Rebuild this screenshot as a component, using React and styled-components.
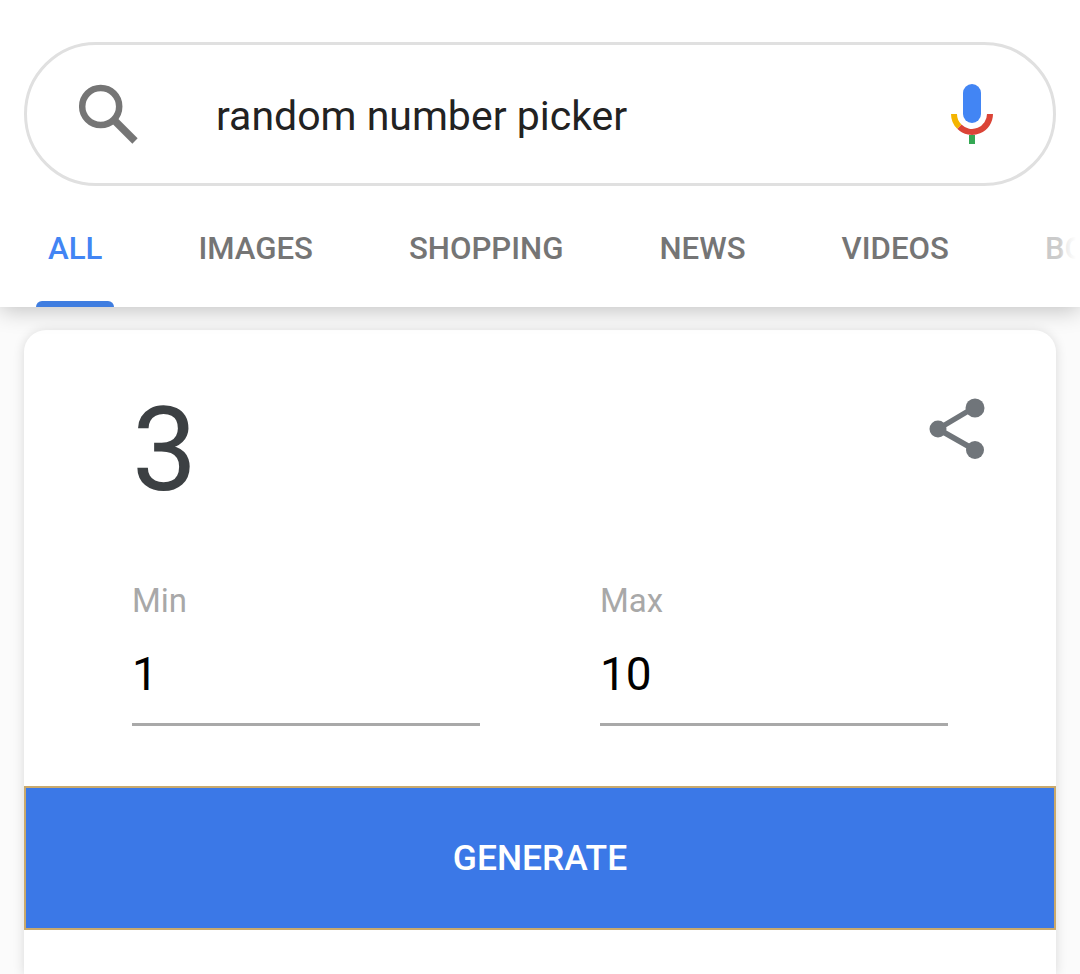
import React from "react";
import styled, { createGlobalStyle } from "styled-components";

const Global = createGlobalStyle`
  html, body { margin: 0; padding: 0; background: #fbfbfb; }
  body { height: 974px; overflow: hidden; font-family: Roboto, "Liberation Sans", sans-serif; }
  * { box-sizing: border-box; }
`;

const Page = styled.div`
  width: 1080px;
  height: 974px;
  overflow: hidden;
  display: flex;
  flex-direction: column;
  background: #fbfbfb;
`;

const Header = styled.header`
  position: relative;
  z-index: 1;
  flex: 0 0 307px;
  background: #fff;
  padding: 42px 24px 0;
  box-shadow: 0 3px 22px rgba(0, 0, 0, 0.24);
`;

const SearchBar = styled.div`
  height: 144px;
  border: 3px solid #e0e0e0;
  border-radius: 72px;
  display: flex;
  align-items: center;
  padding: 0 59px 0 50px;
`;

const SearchIcon = styled.svg`
  width: 64px;
  height: 64px;
  flex: none;
`;

const Query = styled.div`
  flex: 1;
  margin-left: 75px;
  font-size: 41px;
  line-height: 50px;
  color: #222;
  position: relative;
  top: 2px;
`;

const MicIcon = styled.svg`
  width: 46px;
  height: 64px;
  flex: none;
`;

const Tabs = styled.nav`
  position: relative;
  display: flex;
  height: 121px;
  margin: 0 -24px;
  padding-left: 6px;
  overflow: hidden;
`;

const Tab = styled.div`
  position: relative;
  flex: none;
  padding: 0 42px;
  margin-right: 12px;
  height: 121px;
  line-height: 126px;
  font-size: 31.2px;
  font-weight: 500;
  white-space: nowrap;
  color: ${(p) => (p.$active ? "#4285f4" : "#757575")};
  ${(p) =>
    p.$active &&
    `&::after {
      content: "";
      position: absolute;
      left: 30px;
      right: 30px;
      bottom: 0;
      height: 6px;
      background: #3f7de0;
      border-radius: 7px 7px 0 0;
    }`}
`;

const Fade = styled.div`
  position: absolute;
  top: 0;
  bottom: 0;
  right: 0;
  width: 50px;
  background: linear-gradient(90deg, rgba(255,255,255,0.6) 0%, rgba(255,255,255,0.63) 60%, rgba(255,255,255,0.85) 70%, #fff 92%);
`;

const Card = styled.main`
  margin: 23px 24px 0;
  flex: 1;
  background: #fff;
  border-radius: 22px 22px 0 0;
  box-shadow: 0 1px 12px rgba(0, 0, 0, 0.14);
  display: flex;
  flex-direction: column;
`;

const CardBody = styled.div`
  height: 456px;
  padding: 0 67px 0 108px;
  display: flex;
  flex-direction: column;
`;

const ResultRow = styled.div`
  height: 244px;
  display: flex;
  justify-content: space-between;
  align-items: flex-start;
`;

const Result = styled.div`
  font-size: 116px;
  line-height: 136px;
  margin-top: 52px;
  color: #3c4043;
`;

const ShareIcon = styled.svg`
  width: 60px;
  height: 66px;
  margin-top: 68px;
  flex: none;
`;

const Fields = styled.div`
  display: grid;
  grid-template-columns: 348px 348px;
  column-gap: 120px;
`;

const Field = styled.div`
  height: 152px;
  border-bottom: 3px solid #a9a9a9;
  display: flex;
  flex-direction: column;
`;

const FieldLabel = styled.div`
  font-size: 33px;
  line-height: 38px;
  margin-top: 8px;
  color: #a8a8a8;
`;

const FieldValue = styled.div`
  font-size: 46px;
  line-height: 52px;
  margin-top: 28px;
  color: #000;
`;

const Generate = styled.div`
  height: 144px;
  background: #3b78e7;
  border: 2px solid #c9a96c;
  display: flex;
  align-items: center;
  justify-content: center;
  color: #fff;
  font-size: 35.4px;
  font-weight: 500;
`;

export default function App() {
  return (
    <Page>
      <Global />
      <Header>
        <SearchBar>
          <SearchIcon viewBox="0 0 64 64">
            <circle cx="23.7" cy="24.5" r="18.5" fill="none" stroke="#757575" strokeWidth="6.5" />
            <path d="M38.5 39.5 L58 59" stroke="#757575" strokeWidth="7.5" fill="none" />
          </SearchIcon>
          <Query>random number picker</Query>
          <MicIcon viewBox="0 0 46 64">
            <rect x="15" y="2" width="18" height="39" rx="9" fill="#4285f4" />
            <path d="M11.3 44.7 A 18 18 0 0 0 42 32" stroke="#db4437" strokeWidth="6" fill="none" />
            <path d="M6 32 A 18 18 0 0 0 11.3 44.7" stroke="#f4b400" strokeWidth="6" fill="none" />
            <rect x="21" y="53" width="6" height="9" fill="#34a853" />
          </MicIcon>
        </SearchBar>
        <Tabs>
          <Tab $active>ALL</Tab>
          <Tab>IMAGES</Tab>
          <Tab>SHOPPING</Tab>
          <Tab>NEWS</Tab>
          <Tab>VIDEOS</Tab>
          <Tab>BOOKS</Tab>
          <Fade />
        </Tabs>
      </Header>
      <Card>
        <CardBody>
          <ResultRow>
            <Result>3</Result>
            <ShareIcon viewBox="0 0 60 66">
              <path d="M9 31 L46 9 M9 31 L46 52" stroke="#70757a" strokeWidth="5.5" fill="none" />
              <circle cx="9" cy="31" r="8.5" fill="#70757a" />
              <circle cx="46" cy="10" r="9.5" fill="#70757a" />
              <circle cx="46" cy="52" r="9" fill="#70757a" />
            </ShareIcon>
          </ResultRow>
          <Fields>
            <Field>
              <FieldLabel>Min</FieldLabel>
              <FieldValue>1</FieldValue>
            </Field>
            <Field>
              <FieldLabel>Max</FieldLabel>
              <FieldValue>10</FieldValue>
            </Field>
          </Fields>
        </CardBody>
        <Generate>GENERATE</Generate>
      </Card>
    </Page>
  );
}
